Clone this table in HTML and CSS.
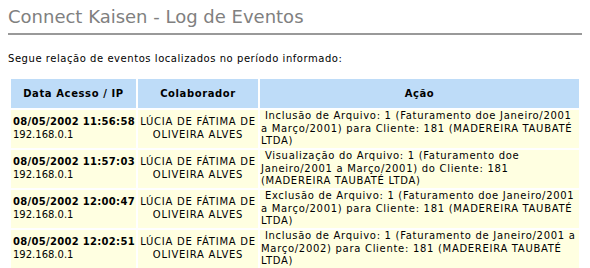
FILE: index.html
```html
<!DOCTYPE html>
<html lang="pt-BR">
<head>
<meta charset="utf-8">
<title>Connect Kaisen - Log de Eventos</title>
<link rel="stylesheet" href="styles.css">
</head>
<body>
<h1 class="title">Connect Kaisen - Log de Eventos</h1>
<p class="intro">Segue relação de eventos localizados no período informado:</p>
<table class="log">
  <colgroup>
    <col class="c-data">
    <col class="c-colab">
    <col class="c-acao">
  </colgroup>
  <thead>
    <tr>
      <th>Data Acesso / IP</th>
      <th>Colaborador</th>
      <th>Ação</th>
    </tr>
  </thead>
  <tbody>
    <tr>
      <td class="when"><b>08/05/2002 11:56:58</b><br><span class="ip">192.168.0.1</span></td>
      <td class="who">LÚCIA DE FÁTIMA DE OLIVEIRA ALVES</td>
      <td class="what">&nbsp;Inclusão de Arquivo: 1 (Faturamento doe Janeiro/2001 a Março/2001) para Cliente: 181 (MADEREIRA TAUBATÉ LTDA)</td>
    </tr>
    <tr>
      <td class="when"><b>08/05/2002 11:57:03</b><br><span class="ip">192.168.0.1</span></td>
      <td class="who">LÚCIA DE FÁTIMA DE OLIVEIRA ALVES</td>
      <td class="what">&nbsp;Visualização do Arquivo: 1 (Faturamento doe Janeiro/2001 a Março/2001) do Cliente: 181 (MADEREIRA TAUBATÉ LTDA)</td>
    </tr>
    <tr>
      <td class="when"><b>08/05/2002 12:00:47</b><br><span class="ip">192.168.0.1</span></td>
      <td class="who">LÚCIA DE FÁTIMA DE OLIVEIRA ALVES</td>
      <td class="what">&nbsp;Exclusão de Arquivo: 1 (Faturamento doe Janeiro/2001 a Março/2001) para Cliente: 181 (MADEREIRA TAUBATÉ LTDA)</td>
    </tr>
    <tr>
      <td class="when"><b>08/05/2002 12:02:51</b><br><span class="ip">192.168.0.1</span></td>
      <td class="who">LÚCIA DE FÁTIMA DE OLIVEIRA ALVES</td>
      <td class="what">&nbsp;Inclusão de Arquivo: 1 (Faturamento de Janeiro/2001 a Março/2002) para Cliente: 181 (MADEREIRA TAUBATÉ LTDA)</td>
    </tr>
  </tbody>
</table>
</body>
</html>
```
FILE: styles.css
```css
body {
  margin: 8px;
  font-family: "DejaVu Sans", Verdana, sans-serif;
  font-size: 10px;
  letter-spacing: 0.55px;
  color: #000;
  background: #fff;
}
.title {
  margin: 0;
  padding: 0 0 7px 0;
  font-size: 18px;
  font-weight: normal;
  line-height: 18px;
  letter-spacing: 0;
  color: #808080;
  border-bottom: 2px solid #999;
}
.intro {
  margin: 18px 0 12px 0;
  line-height: 12px;
}
.log {
  border-collapse: separate;
  border-spacing: 2px;
  width: 572px;
  margin-left: 1px;
}
.c-data { width: 125px; }
.c-colab { width: 120px; }
.log th {
  background: #bedcf8;
  height: 29px;
  padding: 0;
  font-weight: bold;
  letter-spacing: 0.6px;
  text-align: center;
  vertical-align: middle;
}
.log td {
  background: #ffffe1;
  height: 38px;
  padding: 0 1px;
  line-height: 12.6px;
  vertical-align: middle;
}
.log td.when {
  text-align: left;
  padding-left: 2px;
  white-space: nowrap;
}
.log td.when b { letter-spacing: 0.3px; }
.log td.when .ip { letter-spacing: 0; }
.log td.who {
  text-align: center;
  letter-spacing: 0.75px;
}
.log td.what {
  text-align: left;
  letter-spacing: 0.7px;
}
```
